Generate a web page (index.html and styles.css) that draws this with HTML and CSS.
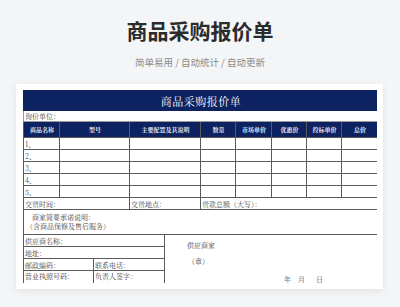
FILE: index.html
```html
<!DOCTYPE html>
<html lang="zh-CN">
<head>
<meta charset="utf-8">
<title>商品采购报价单</title>
<link rel="stylesheet" href="styles.css">
</head>
<body>
<header class="hero">
  <h1 class="hero-title">商品采购报价单</h1>
  <p class="hero-sub">简单易用 / 自动统计 / 自动更新</p>
</header>
<main class="card">
  <div class="sheet">
    <table class="grid main">
      <colgroup>
        <col style="width:36px"><col style="width:70px"><col style="width:71px"><col style="width:35px">
        <col style="width:36px"><col style="width:35px"><col style="width:35px"><col style="width:36px">
      </colgroup>
      <tr class="r-title"><td colspan="8">商品采购报价单</td></tr>
      <tr class="r-line"><td colspan="8">询价单位：</td></tr>
      <tr class="r-head">
        <th>商品名称</th><th>型号</th><th>主要配置及其说明</th><th>数量</th>
        <th>市场单价</th><th>优惠价</th><th>投标单价</th><th>总价</th>
      </tr>
      <tr class="r-data"><td>1、</td><td></td><td></td><td></td><td></td><td></td><td></td><td></td></tr>
      <tr class="r-data"><td>2、</td><td></td><td></td><td></td><td></td><td></td><td></td><td></td></tr>
      <tr class="r-data"><td>3、</td><td></td><td></td><td></td><td></td><td></td><td></td><td></td></tr>
      <tr class="r-data"><td>4、</td><td></td><td></td><td></td><td></td><td></td><td></td><td></td></tr>
      <tr class="r-data"><td>5、</td><td></td><td></td><td></td><td></td><td></td><td></td><td></td></tr>
      <tr class="r-data"><td colspan="2">交货时间：</td><td>交货地点：</td><td colspan="5">货款总额（大写）：</td></tr>
      <tr class="r-note"><td colspan="8"><span class="note-1">商家简要承诺说明：</span><span class="note-2">（含商品保修及售后服务）</span></td></tr>
    </table>
    <table class="grid lower">
      <colgroup>
        <col style="width:70px"><col style="width:71px"><col style="width:213px">
      </colgroup>
      <tr class="r-data"><td colspan="2">供应商名称：</td>
        <td rowspan="4" class="seal">
          <div class="seal-name">供应商家</div>
          <div class="seal-stamp">（章）</div>
          <div class="seal-date"><span>年</span><span>月</span><span>日</span></div>
        </td>
      </tr>
      <tr class="r-data"><td colspan="2">地址：</td></tr>
      <tr class="r-data"><td>邮政编码：</td><td>联系电话：</td></tr>
      <tr class="r-last"><td>营业执照号码：</td><td>负责人签字：</td></tr>
    </table>
  </div>
</main>
</body>
</html>
```
FILE: styles.css
```css
html, body {
  margin: 0;
  padding: 0;
}
body {
  background: #f4f5f7;
  font-family: "Noto Sans CJK SC", "Noto Sans", sans-serif;
  width: 400px;
  height: 307px;
  overflow: hidden;
}
.hero {
  text-align: center;
}
.hero-title {
  margin: 0;
  padding-top: 16px;
  font-size: 21px;
  line-height: 28px;
  font-weight: 700;
  color: #2b2b2b;
}
.hero-sub {
  margin: 11px 0 0;
  font-size: 9.5px;
  line-height: 14px;
  color: #8a8a8a;
}
.card {
  display: block;
  margin: 15px 0 0 16px;
  width: 367px;
  box-sizing: border-box;
  padding: 6px 6px 6px 7px;
  background: #fff;
  box-shadow: 0 2px 8px rgba(0, 0, 0, 0.08);
}
.sheet {
  height: 193px;
  overflow: hidden;
}
.grid {
  width: 354px;
  table-layout: fixed;
  border-collapse: collapse;
  font-family: "Noto Serif CJK SC", "Noto Sans CJK SC", serif;
  font-size: 7px;
  color: #444;
}
.grid td, .grid th {
  border: 1px solid #5a5a5a;
  padding: 0 0 0 1px;
  line-height: 8px;
  white-space: nowrap;
  overflow: hidden;
  vertical-align: middle;
}
.r-title td {
  height: 19px;
  background: #0d2261;
  color: #fff;
  text-align: center;
  font-size: 11px;
  line-height: 12px;
  letter-spacing: 0.5px;
  border-color: #0d2261;
}
.r-line td {
  height: 10px;
  border-color: #9a9a9a;
}
.r-head th {
  height: 15px;
  background: #0d2261;
  color: #e9ecf5;
  font-size: 6px;
  font-weight: 700;
  text-align: center;
  border-color: #5a5a5a;
}
.r-data td {
  height: 11px;
}
.r-note td {
  height: 24px;
  padding-left: 2px;
}
.note-1, .note-2 {
  display: block;
  line-height: 9px;
}
.note-1 {
  padding-left: 6px;
}
.lower tr:first-child td {
  border-top: none;
}
.r-last td {
  height: 20px;
  vertical-align: top;
  padding-top: 1px;
  border-bottom: none;
}
.seal {
  vertical-align: top !important;
  padding: 6px 0 0 22px !important;
}
.seal-name {
  height: 16px;
}
.seal-stamp {
  padding-left: 1px;
  height: 18px;
}
.seal-date {
  padding-left: 97px;
  display: flex;
}
.seal-date span:nth-child(2) {
  margin-left: 7px;
}
.seal-date span:nth-child(3) {
  margin-left: 11px;
}
```
